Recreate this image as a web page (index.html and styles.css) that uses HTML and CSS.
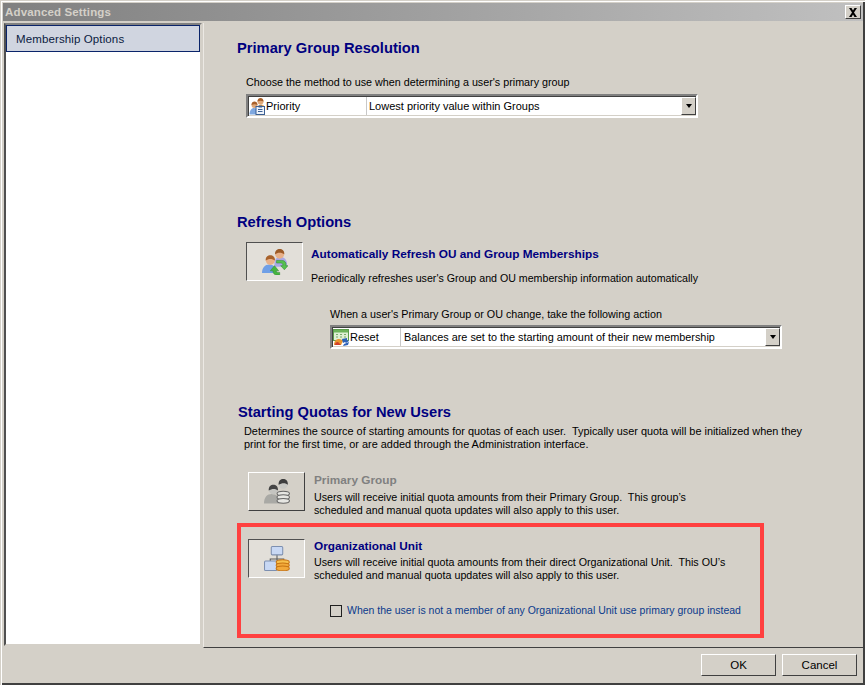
FILE: index.html
```html
<!DOCTYPE html>
<html lang="en">
<head>
<meta charset="utf-8">
<title>Advanced Settings</title>
<link rel="stylesheet" href="styles.css">
</head>
<body>
<div class="window">
  <header class="titlebar">
    <span class="title">Advanced Settings</span>
    <span class="close"><svg width="10" height="9" viewBox="0 0 10 9"><path d="M1 0h2.500L5 2.500 6.500 0H9L6 4.500 9 9H6.500L5 6.500 3.500 9H1l3-4.500z" fill="#000"/></svg></span>
  </header>
  <div class="body">
    <nav class="sidebar"><div class="nav-item">Membership Options</div></nav>
    <main class="content">
      <h2 class="heading h-primary">Primary Group Resolution</h2>
      <p class="text choose">Choose the method to use when determining a user's primary group</p>
      <div class="combo combo-one">
        <span class="combo-key">
          <svg class="key-icon" width="17" height="17" viewBox="0 0 16 17"><circle cx="11" cy="3.500" r="3" fill="#e0a878"/><path d="M8 3.500C8 1 9.500 0 11 0s3 1 3 3.500c-2-1-4-1-6 0z" fill="#a8602a"/><path d="M8 11c0-3 1.500-4.500 3.500-4.500S15.500 8 15.500 10v2H8z" fill="#e8a452"/><circle cx="5" cy="7" r="3" fill="#e0a878"/><path d="M2 7c0-2.500 1.500-3.500 3-3.500S8 4.500 8 7C6 6 4 6 2 7z" fill="#a8602a"/><path d="M0 16.500c0-4 2-6.500 4.500-6.500S9 12 9 16.500z" fill="#7fa8e0"/><rect x="6.500" y="8.500" width="8.500" height="8" fill="#eef3fa" stroke="#3b5f93"/><rect x="9" y="7.500" width="3.500" height="2" fill="#3b5f93"/><path d="M8.500 11.500h4.500M8.500 13.500h4.500" stroke="#3b5f93"/></svg>
          Priority
        </span>
        <span class="combo-value">Lowest priority value within Groups</span>
        <span class="combo-arrow"><i class="arrow"></i></span>
      </div>

      <h2 class="heading h-refresh">Refresh Options</h2>
      <div class="option refresh-option">
        <span class="toggle on">
          <svg width="26" height="26" viewBox="0 0 25 25"><path d="M12 14c0-4 2.500-6.500 5.500-6.500S24 10 24 14v3H12z" fill="#a9a8e6"/><circle cx="17" cy="5" r="4.300" fill="#e8b088"/><path d="M12.500 5c0-3.500 2-5 4.500-5s4.500 1.500 4.500 5C19 3 15 3 12.500 5z" fill="#9c5a26"/><path d="M0 23c0-5 3-8 7-8s7 3 7 8z" fill="#6f9fe6"/><circle cx="8" cy="11" r="4.300" fill="#e8b088"/><path d="M3.500 11c0-3.500 2-5 4.500-5s4.500 1.500 4.500 5C10 9 6 9 3.500 11z" fill="#a8622c"/><path d="M14 11h5c3 0 4.500 2 4 5h2l-3.500 4-3.500-4h2c.3-1.500-.5-2.500-2-2.500H14z" fill="#55c050" stroke="#2e8a2c" stroke-width=".5"/><path d="M8 21l4-5 4 5h-2.500c0 .8.500 1.500 2 1.500H17V25h-3c-2 0-3.500-1.500-3.500-4z" fill="#45b53f" stroke="#2e8a2c" stroke-width=".5"/></svg>
        </span>
        <div class="option-text">
          <h3 class="opt-title">Automatically Refresh OU and Group Memberships</h3>
          <p class="text refresh-desc">Periodically refreshes user's Group and OU membership information automatically</p>
        </div>
      </div>
      <p class="text when">When a user's Primary Group or OU change, take the following action</p>
      <div class="combo combo-two">
        <span class="combo-key short">
          <svg class="key-icon" width="17" height="17" viewBox="0 0 17 17"><rect x=".5" y=".5" width="15" height="11" fill="#dff0d4" stroke="#5c9c4c"/><rect x="1" y="1" width="14" height="2.500" fill="#6db35a"/><path d="M3 5.500h2M7 5.500h2M11 5.500h2M3 8h2M7 8h2M11 8h2" stroke="#79aa6b"/><path d="M1 16c0-4 2-6 5-6 2 0 3 1 4 2l-2 4z" fill="#e8952f"/><path d="M2 16c0-2 1-3 3-3l3 3z" fill="#d13f2b"/><path d="M9 10l5-1v2l2 1-3 2-1-1-2 1zM16 13l-1 3-5 1 1-2z" fill="#2d62b8"/></svg>
          Reset
        </span>
        <span class="combo-value value-two">Balances are set to the starting amount of their new membership</span>
        <span class="combo-arrow"><i class="arrow"></i></span>
      </div>

      <h2 class="heading h-quotas">Starting Quotas for New Users</h2>
      <p class="text quotas-desc">Determines the source of starting amounts for quotas of each user.&nbsp; Typically user quota will be initialized when they<br>print for the first time, or are added through the Administration interface.</p>
      <div class="option primary-option">
        <span class="toggle">
          <svg width="26" height="25" viewBox="0 0 25 24"><circle cx="18.500" cy="5" r="4.300" fill="#c8c8c4"/><path d="M14 5.500C14 1.500 16 0 18.500 0S23 1.500 23 5.500c-2-2-6-2-9 0z" fill="#3e3e3e"/><path d="M0 23.500c0-6 3-9 7.500-9s7.500 3 7.500 9z" fill="#a9a9a5"/><circle cx="9" cy="10.500" r="4.300" fill="#c4c4c0"/><path d="M4.500 11c0-4 2-5.500 4.500-5.500S13.500 7 13.500 11c-2-2-6-2-9 0z" fill="#444"/><ellipse cx="18.500" cy="14" rx="6" ry="2.300" fill="#e6e6e2" stroke="#666"/><ellipse cx="18.500" cy="17.500" rx="6" ry="2.300" fill="#e6e6e2" stroke="#666"/><ellipse cx="18.500" cy="21" rx="6" ry="2.300" fill="#e6e6e2" stroke="#666"/></svg>
        </span>
        <div class="option-text wide-gap">
          <h3 class="opt-title muted">Primary Group</h3>
          <p class="text two-line">Users will receive initial quota amounts from their Primary Group.&nbsp; This group’s<br>scheduled and manual quota updates will also apply to this user.</p>
        </div>
      </div>
      <section class="highlight">
        <div class="option ou-option">
          <span class="toggle on">
            <svg width="26" height="25" viewBox="0 0 25 24"><path d="M12.500 8v6M6 15v-2.500h13V15" stroke="#5a5a5a" fill="none"/><rect x="7" y=".5" width="11" height="8" rx="1" fill="#c8d8f4" stroke="#7c8fb0"/><rect x=".5" y="14.500" width="12" height="9" rx="1" fill="#c8d8f4" stroke="#7c8fb0"/><ellipse cx="18" cy="15.500" rx="6.300" ry="2.200" fill="#f7c14d" stroke="#c87412"/><ellipse cx="18" cy="18.500" rx="6.300" ry="2.200" fill="#f2a93a" stroke="#c87412"/><ellipse cx="18" cy="21.500" rx="6.300" ry="2.200" fill="#f2a93a" stroke="#c87412"/></svg>
          </span>
          <div class="option-text wide-gap">
            <h3 class="opt-title">Organizational Unit</h3>
            <p class="text two-line ou-text">Users will receive initial quota amounts from their direct Organizational Unit.&nbsp; This OU’s<br>scheduled and manual quota updates will also apply to this user.</p>
          </div>
        </div>
        <label class="check-row"><span class="checkbox"></span><span class="check-label">When the user is not a member of any Organizational Unit use primary group instead</span></label>
      </section>
    </main>
  </div>
  <footer class="footer">
    <button class="btn" type="button">OK</button>
    <button class="btn" type="button">Cancel</button>
  </footer>
</div>
</body>
</html>
```
FILE: styles.css
```css
* { box-sizing: border-box; }
html, body { margin: 0; padding: 0; }
body { width: 865px; height: 685px; overflow: hidden; background: #d4d0c8; font-family: "Liberation Sans", Arial, sans-serif; font-size: 11px; color: #000; }
h2, h3, p { margin: 0; }

.window { width: 865px; height: 685px; display: flex; flex-direction: column; padding: 3px 2px 2px 2px; box-shadow: inset 1px 1px 0 #d4d0c8, inset 2px 2px 0 #fff, inset -2px -2px 0 #404040; }

.titlebar { height: 18px; margin: 0 0 0 1px; padding: 0 2px 0 2px; display: flex; align-items: center; justify-content: space-between; background: linear-gradient(90deg, #808080, #c0c0c0); flex: none; }
.title { color: #d4d0c8; font-weight: bold; font-size: 11.500px; letter-spacing: .15px; }
.close { width: 16px; height: 14px; display: flex; align-items: center; justify-content: center; background: #d4d0c8; border: 1px solid; border-color: #fff #404040 #404040 #fff; }

.body { flex: none; height: 625px; margin-top: 2px; display: flex; }
.sidebar { width: 198px; height: 623px; margin-left: 2px; background: #fff; border: 2px solid; border-color: #808080 #d4d0c8 #d4d0c8 #505050; flex: none; }
.nav-item { height: 27px; padding-left: 9px; display: flex; align-items: center; background: #d0d5e0; border: 1px solid #0a246a; color: #0a1a40; font-size: 11.500px; letter-spacing: .12px; }

.content { flex: 1; height: 625px; margin-left: 1px; padding-left: 33px; border-left: 1px solid #ece9e4; border-bottom: 1px solid #404040; }

.heading { color: #000080; font-size: 14.700px; line-height: 18px; font-weight: bold; }
.h-primary { margin-top: 16px; }
.h-refresh { margin-top: 95px; }
.h-quotas { margin-top: 54px; margin-left: 1px; }

.text { line-height: 13px; font-size: 10.650px; color: #000; }
.choose { margin: 19px 0 0 9px; font-size: 10.750px; }
.combo { width: 452px; height: 24px; display: flex; background: #fff; border: 2px solid; border-color: #808080 #fff #fff #808080; box-shadow: inset 1px 1px 0 #404040, inset -1px -1px 0 #d4d0c8; padding: 1px 0 1px 1px; align-items: stretch; white-space: nowrap; }
.combo-one { margin: 5px 0 0 9px; }
.combo-two { margin: 4px 0 0 93px; }
.combo-key { width: 118px; display: flex; align-items: center; border-right: 1px solid #c8c8c8; }
.combo-key.short { width: 68px; }
.combo-value { flex: 1; display: flex; align-items: center; padding-left: 2px; }
.value-two { padding-left: 3px; font-size: 10.860px; }
.combo-arrow { width: 15px; display: flex; align-items: center; justify-content: center; background: #d4d0c8; border: 1px solid; border-color: #fff #404040 #404040 #fff; }
.arrow { width: 0; height: 0; border-style: solid; border-width: 4px 3.500px 0; border-color: #000 transparent transparent; }

.option { display: flex; }
.toggle { width: 57px; height: 39px; flex: none; display: flex; align-items: center; justify-content: center; border: 1px solid; border-color: #fff #404040 #404040 #fff; }
.toggle.on { background: #e2dfd9; border-color: #505050 #fff #fff #505050; }
.option-text { margin-left: 8px; white-space: nowrap; }
.wide-gap { margin-left: 9px; }
.wide-gap .text { font-size: 10.710px; }
.opt-title { color: #000080; font-size: 11.800px; line-height: 14px; font-weight: bold; }
.opt-title.muted { color: #808080; }

.refresh-option { margin: 11px 0 0 9px; }
.refresh-option .option-text { padding-top: 5px; }
.refresh-desc { margin-top: 11px; }
.when { margin: 23px 0 0 93px; font-size: 10.750px; }

.quotas-desc { margin: 4px 0 0 7px; font-size: 10.900px; }
.primary-option { margin: 21px 0 0 11px; height: 51px; }
.primary-option .option-text { padding-top: 1px; }
.two-line { margin-top: 4px; }

.highlight { width: 527px; height: 115px; border: 4px solid #ff4040; padding: 12px 0 0 7px; }
.ou-text { margin-top: 3px; }
.check-row { display: flex; align-items: center; margin: 22px 0 0 82px; }
.checkbox { width: 12px; height: 12px; border: 1px solid #202020; background: #d4d0c8; flex: none; }
.check-label { margin-left: 5px; color: #0a3a8c; font-size: 10.490px; line-height: 13px; white-space: nowrap; }

.footer { flex: 1; display: flex; justify-content: flex-end; gap: 6px; padding: 6px 6px 0 0; }
.btn { width: 75px; height: 22px; background: #d4d0c8; border: 1px solid; border-color: #fff #404040 #404040 #fff; font: 11.500px "Liberation Sans", Arial, sans-serif; color: #000; padding: 0; }
```
